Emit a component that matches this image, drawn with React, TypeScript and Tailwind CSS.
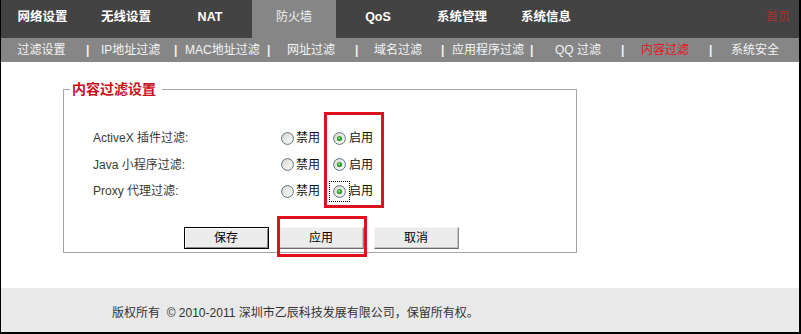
import React from 'react';

const tabs = ['网络设置', '无线设置', 'NAT', '防火墙', 'QoS', '系统管理', '系统信息'];

// sub-menu: text items and bars, each with its own left gap and width
const subItems = [
  { t: '过滤设置', c: 'ml-[16px] w-[49px]' },
  { t: '|', c: 'ml-[20px] w-[3px] font-bold', bar: true },
  { t: 'IP地址过滤', c: 'ml-[12px] w-[59px]' },
  { t: '|', c: 'ml-[14px] w-[3px] font-bold', bar: true },
  { t: 'MAC地址过滤', c: 'ml-[8px] w-[72px]' },
  { t: '|', c: 'ml-[10px] w-[3px] font-bold', bar: true },
  { t: '网址过滤', c: 'ml-[17px] w-[48px]' },
  { t: '|', c: 'ml-[20px] w-[3px] font-bold', bar: true },
  { t: '域名过滤', c: 'ml-[16px] w-[48px]' },
  { t: '|', c: 'ml-[19px] w-[3px] font-bold', bar: true },
  { t: '应用程序过滤', c: 'ml-[8px] w-[72px]' },
  { t: '|', c: 'ml-[6px] w-[3px] font-bold', bar: true },
  { t: 'QQ 过滤', c: 'ml-[22px] w-[44px]' },
  { t: '|', c: 'ml-[22px] w-[3px] font-bold', bar: true },
  { t: '内容过滤', c: 'ml-[17px] w-[48px] text-[#e8141e]' },
  { t: '|', c: 'ml-[20px] w-[3px] font-bold', bar: true },
  { t: '系统安全', c: 'ml-[19px] w-[48px]' },
];

const rows = [
  { label: 'ActiveX 插件过滤:', focus: false },
  { label: 'Java 小程序过滤:', focus: false },
  { label: 'Proxy 代理过滤:', focus: true },
];

function Radio({ checked }: { checked: boolean }) {
  return (
    <svg width="13" height="13" viewBox="0 0 13 13" className="block">
      <defs>
        <linearGradient id="radioFill" x1="0" y1="0" x2="1" y2="1">
          <stop offset="0" stopColor="#d6d6ce" />
          <stop offset="1" stopColor="#ffffff" />
        </linearGradient>
      </defs>
      <circle cx="6.5" cy="6.5" r="5.9" fill="url(#radioFill)" stroke="#5f7180" strokeWidth="1" />
      {checked && (
        <>
          <circle cx="6.5" cy="6.5" r="2.6" fill="#2f9a2f" />
          <circle cx="6.2" cy="6.2" r="1.1" fill="#8fdc8f" />
        </>
      )}
    </svg>
  );
}

export default function App() {
  return (
    <div
      className="relative w-[801px] h-[334px] border-l border-r-2 border-b-2 border-black bg-white flex flex-col overflow-hidden"
      style={{ fontFamily: '"Liberation Sans", "Noto Sans CJK SC", sans-serif' }}
    >
      {/* main menu */}
      <div className="h-[38px] bg-[#434343] flex items-stretch shrink-0">
        {tabs.map((tab, i) => (
          <div
            key={tab}
            className={
              i === 3
                ? 'w-[84px] bg-[#868686] flex items-center justify-center pb-[4px] text-[12px] text-[#f2f2f2]'
                : i === 0
                ? 'w-[83px] flex items-center justify-center pb-[4px] text-[12.5px] font-bold text-white'
                : 'w-[84px] flex items-center justify-center pb-[4px] text-[12.5px] font-bold text-white'
            }
          >
            {tab}
          </div>
        ))}
        <div className="ml-auto mr-[9px] flex items-center pb-[4px] text-[12px] text-[#a83232]">首页</div>
      </div>

      {/* sub menu */}
      <div className="h-[24px] bg-[#868686] flex items-center text-[12px] text-[#f4f4f4] whitespace-nowrap shrink-0">
        {subItems.map((s, i) => (
          <span key={i} className={`${s.c} text-center leading-[16px]`}>
            {s.t}
          </span>
        ))}
      </div>

      {/* content */}
      <div className="h-[226px] pt-[18px] shrink-0">
        <fieldset className="ml-[62px] w-[514px] border border-[#a4a4a4] pb-[3px]">
          <legend className="ml-[6px] pl-[2px] pr-[6px] text-[14px] leading-[18px] font-bold text-[#c8101a]">
            内容过滤设置
          </legend>
          <div className="pt-[27px] pl-[29px] flex flex-col">
            {rows.map((r) => (
              <div key={r.label} className="h-[26.5px] flex items-center">
                <div className="w-[188px] text-[12px] text-[#3a3a3a]">{r.label}</div>
                <div className="flex items-center text-[12px] text-[#111]">
                  <Radio checked={false} />
                  <span className="ml-[2px]">禁用</span>
                  <span
                    className={
                      r.focus
                        ? 'ml-[13px] outline-1 outline-dotted outline-black outline-offset-[3px]'
                        : 'ml-[13px]'
                    }
                  >
                    <Radio checked />
                  </span>
                  <span className="ml-[3px]">启用</span>
                </div>
              </div>
            ))}
          </div>
          <div className="mt-[22px] flex justify-center gap-[10px] pl-[2px]">
            <button className="w-[85px] h-[22px] bg-[#ececec] border border-black shadow-[inset_1px_1px_0_#ffffff,inset_-1px_-1px_0_#8a8a8a] text-[12px] text-black">
              保存
            </button>
            <button className="w-[85px] h-[22px] bg-[#ececec] border border-[#f6f6f6] border-r-[#8a8a8a] border-b-[#6a6a6a] shadow-[inset_-1px_-1px_0_#c4c4c4] text-[12px] text-black">
              应用
            </button>
            <button className="w-[85px] h-[22px] bg-[#ececec] border border-[#f6f6f6] border-r-[#8a8a8a] border-b-[#6a6a6a] shadow-[inset_-1px_-1px_0_#c4c4c4] text-[12px] text-black">
              取消
            </button>
          </div>
        </fieldset>
      </div>

      {/* footer */}
      <div className="h-[44px] bg-[#e9e9e9] flex items-center pl-[111px] pt-[5px] text-[12px] text-[#333] whitespace-nowrap shrink-0">
        版权所有 &nbsp;© 2010-2011 深圳市乙辰科技发展有限公司，保留所有权。
      </div>

      {/* red annotation boxes */}
      <div className="absolute left-[323px] top-[112px] w-[60px] h-[96px] border-[3px] border-[#e0101c] pointer-events-none" />
      <div className="absolute left-[276px] top-[216px] w-[90px] h-[41px] border-[3px] border-[#e0101c] pointer-events-none" />
    </div>
  );
}
